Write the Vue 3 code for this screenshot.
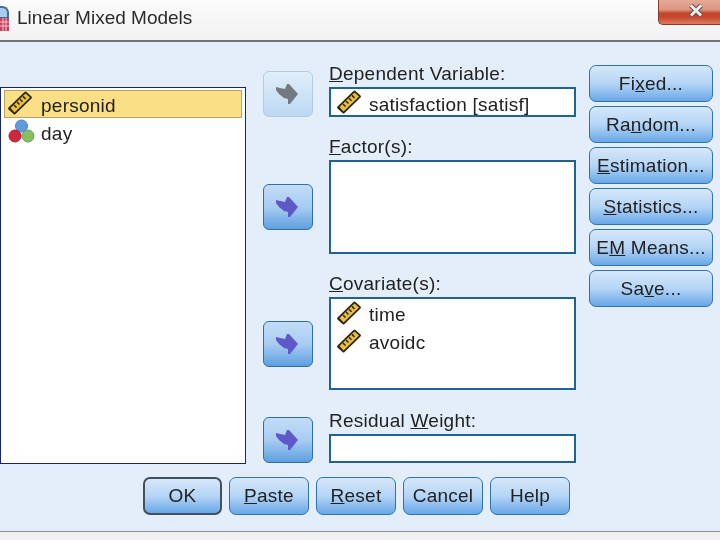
<template>
  <div class="dialog">
    <header class="titlebar">
      <svg class="app-icon" width="10" height="26" viewBox="0 0 10 26">
        <path d="M0 1h2q6 0 7 6v7H0z" fill="#3f6f9f" />
        <path d="M0 3h2q4 0 5 4v5H0z" fill="#a9cdea" />
        <rect x="0" y="13" width="9" height="13" fill="#c8405a" />
        <path d="M3 13v13M6 13v13M0 17h9M0 21h9" stroke="#f3c6cf" stroke-width="1" />
      </svg>
      <span class="title">Linear Mixed Models</span>
      <div class="close-btn">
        <svg width="16" height="15" viewBox="0 0 16 15">
          <path d="M3 2.500l10 10M13 2.500l-10 10" stroke="#55504e" stroke-width="5" />
          <path d="M3 2.500l10 10M13 2.500l-10 10" stroke="#efeae6" stroke-width="3" />
        </svg>
      </div>
    </header>

    <main class="body">
      <section class="source-list">
        <div
          v-for="v in sourceVars"
          :key="v.name"
          class="var-row"
          :class="{ selected: v.selected }"
        >
          <svg v-if="v.type === 'scale'" class="var-icon" width="26" height="26" viewBox="0 0 26 26">
            <use href="#ruler" x="1" y="-1" />
          </svg>
          <svg v-else class="var-icon" width="26" height="26" viewBox="0 0 26 26">
            <circle cx="15.500" cy="7" r="6" fill="#5f9be0" stroke="#4a7fc0" />
            <circle cx="22" cy="17" r="6" fill="#86c060" stroke="#6aa04c" />
            <circle cx="9" cy="17" r="6" fill="#d0283a" stroke="#a81c2c" />
          </svg>
          <span>{{ v.name }}</span>
        </div>
      </section>

      <section class="targets">
        <div class="target dep">
          <button class="arrow-btn off"><svg width="24" height="22" viewBox="0 0 24 22"><use href="#arrow" /></svg></button>
          <label class="lbl"><u>D</u>ependent Variable:</label>
          <div class="box single">
            <div class="var-row inner">
              <svg class="var-icon" width="26" height="26" viewBox="0 0 26 26"><use href="#ruler" /></svg>
              <span>satisfaction [satisf]</span>
            </div>
          </div>
        </div>

        <div class="target factor">
          <button class="arrow-btn"><svg width="24" height="22" viewBox="0 0 24 22"><use href="#arrow" /></svg></button>
          <label class="lbl"><u>F</u>actor(s):</label>
          <div class="box"></div>
        </div>

        <div class="target cov">
          <button class="arrow-btn"><svg width="24" height="22" viewBox="0 0 24 22"><use href="#arrow" /></svg></button>
          <label class="lbl"><u>C</u>ovariate(s):</label>
          <div class="box">
            <div v-for="c in covariates" :key="c" class="var-row inner">
              <svg class="var-icon" width="26" height="26" viewBox="0 0 26 26"><use href="#ruler" /></svg>
              <span>{{ c }}</span>
            </div>
          </div>
        </div>

        <div class="target weight">
          <button class="arrow-btn"><svg width="24" height="22" viewBox="0 0 24 22"><use href="#arrow" /></svg></button>
          <label class="lbl">Residual <u>W</u>eight:</label>
          <div class="box single"></div>
        </div>
      </section>

      <aside class="side-buttons">
        <button class="btn">Fi<u>x</u>ed...</button>
        <button class="btn">Ra<u>n</u>dom...</button>
        <button class="btn"><u>E</u>stimation...</button>
        <button class="btn"><u>S</u>tatistics...</button>
        <button class="btn">E<u>M</u> Means...</button>
        <button class="btn">Sa<u>v</u>e...</button>
      </aside>
    </main>

    <div class="actions">
      <button class="btn default">OK</button>
      <button class="btn"><u>P</u>aste</button>
      <button class="btn"><u>R</u>eset</button>
      <button class="btn">Cancel</button>
      <button class="btn">Help</button>
    </div>

    <footer class="bottom-strip"></footer>

    <svg width="0" height="0" class="defs">
      <defs>
        <g id="ruler">
          <path d="M1.500 17.500 17.500 2q1-1 2 0l5 4.500q1 1 0 2L8.500 24q-1 1-2 0l-5-4.500q-1-1 0-2z" fill="#2e2610" />
          <path d="M3.500 18 18.500 3.500l4.500 4L7.500 22.500z" fill="#e8c03e" />
          <path d="M7 15l2.500 2.500M10 12l2.500 2.500M13 9.200l2.500 2.500M16 6.400l2.500 2.500" stroke="#2e2610" stroke-width="1.500" />
        </g>
        <path id="arrow" d="M0 4l4 1 5 1 2-5h2l9 10-8 10h-2v-5l-4-1-5-4-3-4z" />
      </defs>
    </svg>
  </div>
</template>

<script setup>
const sourceVars = [
  { name: 'personid', type: 'scale', selected: true },
  { name: 'day', type: 'nominal', selected: false }
]

const covariates = ['time', 'avoidc']
</script>

<style>
html, body {
  margin: 0;
  background: #e3eefa;
}
</style>

<style scoped>
.dialog {
  width: 720px;
  height: 540px;
  overflow: hidden;
  display: flex;
  flex-direction: column;
  background: #e3eefa;
  font-family: "Liberation Sans", Arial, sans-serif;
  font-size: 19px;
  letter-spacing: 0.250px;
  color: #222;
  filter: blur(0.400px);
}

.titlebar {
  height: 40px;
  flex: none;
  display: flex;
  align-items: flex-start;
  background: linear-gradient(#fbfbfb, #f2f2f2);
  border-bottom: 2px solid #6f7479;
  box-sizing: content-box;
}

.app-icon {
  margin-top: 5px;
  flex: none;
}

.title {
  margin: 7px 0 0 7px;
  font-size: 19px;
  letter-spacing: 0;
  color: #2b2b2b;
}

.close-btn {
  margin-left: auto;
  width: 62px;
  height: 25px;
  box-sizing: border-box;
  border: 1px solid #8a3a2a;
  border-width: 0 0 1px 1px;
  border-radius: 0 0 0 5px;
  background: linear-gradient(#e6a999, #dc9581 40%, #c2472b 55%, #c2472b 70%, #e07c62);
  display: flex;
  justify-content: flex-end;
  padding: 3px 16px 0 0;
}

.body {
  flex: 1;
  display: flex;
  align-items: flex-start;
}

.source-list {
  width: 238px;
  height: 371px;
  margin-top: 45px;
  flex: none;
  background: #fff;
  border: 1px solid #17246b;
  padding: 2px 3px;
}

.var-row {
  height: 28px;
  display: flex;
  align-items: center;
  gap: 9px;
  padding-left: 2px;
  box-sizing: border-box;
}

.source-list .var-row span {
  padding-top: 3px;
}

.var-row.selected {
  background: #fbdf87;
  outline: 1px solid #b7a662;
  outline-offset: -1px;
}

.var-icon {
  flex: none;
  overflow: visible;
}

.targets {
  margin: 23px 0 0 17px;
  width: 313px;
  flex: none;
}

.target {
  display: grid;
  grid-template-columns: 50px 247px;
  column-gap: 16px;
  grid-template-rows: 22px auto;
}

.arrow-btn {
  grid-column: 1;
  grid-row: 1 / 3;
  width: 50px;
  height: 46px;
  padding: 0;
  display: flex;
  align-items: center;
  justify-content: center;
  border: 1px solid #2d6fa8;
  border-radius: 6px;
  background: linear-gradient(#c4dcf6, #a7cdf2 50%, #5f9fe0);
  fill: #5f58c8;
}

.arrow-btn.off {
  border-color: #b0cce4;
  background: linear-gradient(#e2eefa, #bcd8f4);
  fill: #757a80;
}

.lbl {
  grid-column: 2;
  grid-row: 1;
  line-height: 18px;
  white-space: nowrap;
}

.box {
  grid-column: 2;
  grid-row: 2;
  background: #fff;
  border: 2px solid #1f6394;
  box-sizing: border-box;
  padding: 0 0 0 5px;
}

.dep .arrow-btn { align-self: end; }
.dep .box { height: 30px; }

.factor { margin-top: 21px; }
.factor .arrow-btn { grid-row: 2; align-self: center; }
.factor .box { height: 94px; }

.cov { margin-top: 21px; }
.cov .arrow-btn { grid-row: 2; align-self: center; }
.cov .box { height: 93px; }
.cov .inner span { padding-top: 3px; }

.weight { margin-top: 22px; }
.weight .arrow-btn { align-self: end; }
.weight .box { height: 29px; }

.inner {
  padding-left: 0;
  height: 28px;
  gap: 7px;
}

.single .inner {
  height: 26px;
}

.single .inner span {
  padding-top: 6px;
}

.side-buttons {
  margin: 23px 0 0 13px;
  width: 124px;
  flex: none;
  display: flex;
  flex-direction: column;
  gap: 4px;
}

.btn {
  height: 37px;
  padding: 0;
  font: inherit;
  letter-spacing: inherit;
  color: #222;
  white-space: nowrap;
  border: 1px solid #2e74ad;
  border-radius: 7px;
  background: linear-gradient(#d6e7fa, #b5d5f6 50%, #69a7e8);
}

.actions {
  flex: none;
  height: 67px;
  padding: 13px 0 0 143px;
  box-sizing: border-box;
  display: flex;
  gap: 7px;
}

.actions .btn {
  width: 80px;
  height: 38px;
}

.actions .btn.default {
  width: 79px;
  border: 2px solid #44505c;
}

.bottom-strip {
  flex: none;
  height: 9px;
  background: #f0f0f0;
  border-top: 1px solid #8b8f92;
  box-sizing: border-box;
}

.defs {
  position: absolute;
}
</style>
